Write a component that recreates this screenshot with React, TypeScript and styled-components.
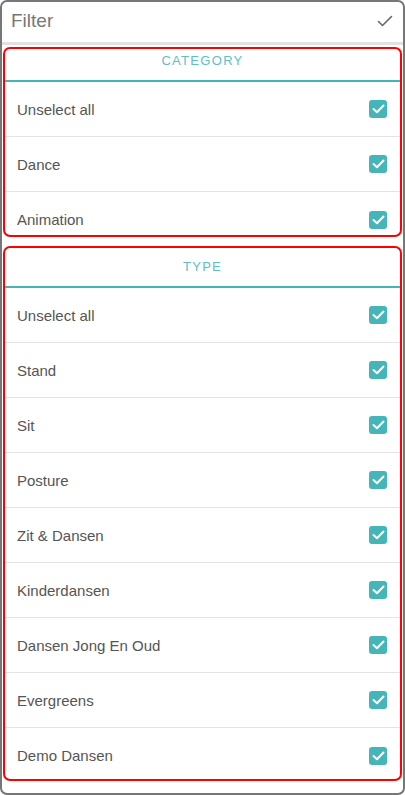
import React from "react";
import styled, { createGlobalStyle } from "styled-components";

const Global = createGlobalStyle`
  html, body { margin: 0; padding: 0; background: #fff; }
  body { font-family: "Liberation Sans", Arial, sans-serif; }
  * { box-sizing: border-box; }
`;

const Panel = styled.div`
  width: 405px;
  height: 795px;
  border: 2px solid #777;
  border-radius: 7px;
  overflow: hidden;
  display: flex;
  flex-direction: column;
  background: #fff;
`;

const Header = styled.div`
  height: 43px;
  flex: none;
  display: flex;
  align-items: center;
  justify-content: space-between;
  padding: 0 10px 2px 9px;
  border-bottom: 3px solid #e2e2e2;
`;

const Title = styled.span`
  font-size: 19px;
  color: #777;
`;

const Sections = styled.div`
  display: flex;
  flex-direction: column;
  gap: 9px;
  padding: 2px 1px 0 1px;
`;

const Section = styled.div<{ $h: number }>`
  height: ${(p) => p.$h}px;
  border: 2px solid #ff0000;
  border-radius: 7px;
  overflow: hidden;
  flex: none;
`;

const Inner = styled.div<{ $offset: number }>`
  margin-top: ${(p) => -p.$offset}px;
`;

const SectionTitle = styled.div`
  height: 40px;
  display: flex;
  align-items: center;
  justify-content: center;
  padding-bottom: 1px;
  border-bottom: 2px solid #46b4b6;
  color: #5dc0c4;
  font-size: 13px;
  letter-spacing: 1.3px;
  text-transform: uppercase;
`;

const Row = styled.div`
  height: 55px;
  display: flex;
  align-items: center;
  justify-content: space-between;
  padding: 0 13px 0 12px;
  border-bottom: 1px solid #e3e3e3;
  &:last-child { border-bottom: none; }
`;

const Label = styled.span`
  font-size: 15px;
  color: #555;
`;

const Box = styled.span`
  width: 18px;
  height: 18px;
  border-radius: 3px;
  background: #45b5b8;
  display: flex;
  align-items: center;
  justify-content: center;
`;

const Check = () => (
  <Box>
    <svg width="13" height="10" viewBox="0 0 13 10">
      <polyline points="1.5,5 5,8.3 11.5,1.5" fill="none" stroke="#fff" strokeWidth="2" strokeLinecap="round" strokeLinejoin="round" />
    </svg>
  </Box>
);

const HeaderCheck = () => (
  <svg width="16" height="12" viewBox="0 0 16 12">
    <polyline points="1.5,6.5 5.5,10.5 14.5,1.5" fill="none" stroke="#666" strokeWidth="1.6" strokeLinecap="round" strokeLinejoin="round" />
  </svg>
);

const groups = [
  { title: "Category", h: 190, offset: 7, items: ["Unselect all", "Dance", "Animation"] },
  {
    title: "Type",
    h: 535,
    offset: 0,
    items: [
      "Unselect all",
      "Stand",
      "Sit",
      "Posture",
      "Zit & Dansen",
      "Kinderdansen",
      "Dansen Jong En Oud",
      "Evergreens",
      "Demo Dansen",
    ],
  },
];

export default function App() {
  return (
    <>
      <Global />
      <Panel>
        <Header>
          <Title>Filter</Title>
          <HeaderCheck />
        </Header>
        <Sections>
          {groups.map((g) => (
            <Section key={g.title} $h={g.h}>
              <Inner $offset={g.offset}>
                <SectionTitle>{g.title}</SectionTitle>
                {g.items.map((it) => (
                  <Row key={it}>
                    <Label>{it}</Label>
                    <Check />
                  </Row>
                ))}
              </Inner>
            </Section>
          ))}
        </Sections>
      </Panel>
    </>
  );
}
